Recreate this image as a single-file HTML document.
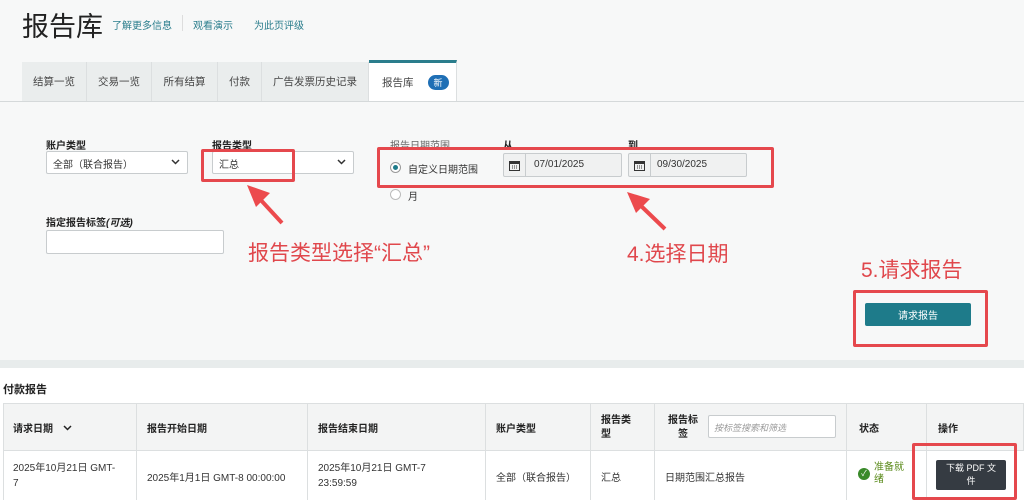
<!DOCTYPE html>
<html><head><meta charset="utf-8"><style>
*{margin:0;padding:0;box-sizing:border-box}
body{width:1024px;height:500px;overflow:hidden;background:#f7f8f8;font-family:"Liberation Sans","Noto Sans CJK SC",sans-serif;color:#333;position:relative}
.a{position:absolute;white-space:nowrap}
.lbl{font-size:10px;font-weight:bold;color:#222}
.box{background:#fff;border:1px solid #c8ccce;border-radius:2px}
.red{position:absolute;border:3px solid #e5484d;border-radius:2px}
.ann{position:absolute;color:#e0474c;font-size:21px;white-space:nowrap;font-family:"Liberation Sans","Noto Sans CJK SC",sans-serif}
.tab{position:absolute;top:62px;height:39px;background:#eaeded;border-right:1px solid #dcdfe0;font-size:10.5px;color:#444;display:flex;align-items:center;justify-content:center}
.th,.td{position:absolute;font-size:10px;display:flex;align-items:center;padding-left:10px}
.th{top:404px;height:47px;font-weight:bold;color:#222}
.td{top:452px;height:48px;color:#333}
.vl{position:absolute;width:1px;background:#dcdfe0}
.chev{position:absolute;right:7px;top:7px}
.cal{position:absolute;left:0;top:0;width:22px;height:22px;border-right:1px solid #c8ccce;display:flex;align-items:center;justify-content:center}
</style></head><body>
<div class="a" style="left:22px;top:5px;font-size:27px;color:#222">报告库</div>
<div class="a" style="left:112px;top:17px;font-size:10px;color:#2a7d8c">了解更多信息</div>
<div class="a" style="left:182px;top:15px;width:1px;height:16px;background:#ddd"></div>
<div class="a" style="left:193px;top:17px;font-size:10px;color:#2a7d8c">观看演示</div>
<div class="a" style="left:254px;top:17px;font-size:10px;color:#2a7d8c">为此页评级</div>

<div class="tab" style="left:22px;width:65px">结算一览</div>
<div class="tab" style="left:87px;width:65px">交易一览</div>
<div class="tab" style="left:152px;width:66px">所有结算</div>
<div class="tab" style="left:218px;width:44px">付款</div>
<div class="tab" style="left:262px;width:107px">广告发票历史记录</div>
<div class="tab" style="left:369px;width:88px;background:#fff;border-top:3px solid #2a7d8c;top:60px;height:42px;justify-content:flex-start;padding-left:13px">报告库<span style="margin-left:14px;background:#1f6fb5;color:#fff;font-size:9px;border-radius:8px;padding:1px 6px">新</span></div>
<div class="a" style="left:0;top:101px;width:1024px;height:1px;background:#d5d9da"></div>

<div class="a lbl" style="left:46px;top:137px">账户类型</div>
<div class="a box" style="left:46px;top:151px;width:142px;height:23px;font-size:10px;padding:4px 6px">全部（联合报告）<svg class="chev" width="9" height="6"><path d="M1 1L4.5 4.5L8 1" fill="none" stroke="#333" stroke-width="1.5"/></svg></div>
<div class="a lbl" style="left:212px;top:137px">报告类型</div>
<div class="a box" style="left:212px;top:151px;width:142px;height:23px;font-size:10px;padding:4px 6px">汇总<svg class="chev" width="9" height="6"><path d="M1 1L4.5 4.5L8 1" fill="none" stroke="#333" stroke-width="1.5"/></svg></div>
<div class="red" style="left:201px;top:149px;width:94px;height:33px"></div>

<div class="a" style="left:390px;top:137px;font-size:10px;color:#666">报告日期范围</div>
<div class="a lbl" style="left:503px;top:137px">从</div>
<div class="a lbl" style="left:628px;top:137px">到</div>
<div class="a" style="left:390px;top:162px;width:11px;height:11px;border-radius:50%;border:1px solid #999;background:#fff"><div style="margin:2px;width:5px;height:5px;border-radius:50%;background:#1e7b8a"></div></div>
<div class="a" style="left:408px;top:161px;font-size:10px">自定义日期范围</div>
<div class="a" style="left:390px;top:189px;width:11px;height:11px;border-radius:50%;border:1px solid #bbb;background:#fff"></div>
<div class="a" style="left:408px;top:188px;font-size:10px">月</div>
<div class="a box" style="left:503px;top:153px;width:119px;height:24px;background:#f0f1f1;font-size:10px"><div class="cal"><svg width="11" height="11"><rect x="0.5" y="1.5" width="10" height="9" fill="none" stroke="#333"/><rect x="0.5" y="1.5" width="10" height="2.5" fill="#333"/><path d="M3 6h1M5 6h1M7 6h1M3 8h1M5 8h1M7 8h1" stroke="#333"/></svg></div><div style="position:absolute;left:30px;top:5px">07/01/2025</div></div>
<div class="a box" style="left:628px;top:153px;width:119px;height:24px;background:#f0f1f1;font-size:10px"><div class="cal"><svg width="11" height="11"><rect x="0.5" y="1.5" width="10" height="9" fill="none" stroke="#333"/><rect x="0.5" y="1.5" width="10" height="2.5" fill="#333"/><path d="M3 6h1M5 6h1M7 6h1M3 8h1M5 8h1M7 8h1" stroke="#333"/></svg></div><div style="position:absolute;left:28px;top:5px">09/30/2025</div></div>
<div class="red" style="left:377px;top:147px;width:397px;height:41px"></div>

<div class="a lbl" style="left:46px;top:214px">指定报告标签<i>(可选)</i></div>
<div class="a box" style="left:46px;top:230px;width:178px;height:24px"></div>

<div class="ann" style="left:248px;top:237px">报告类型选择“汇总”</div>
<div class="ann" style="left:627px;top:238px">4.选择日期</div>
<div class="ann" style="left:861px;top:254px">5.请求报告</div>
<div class="ann" style="left:731px;top:377px">6.下载保存，文件发给财务</div>

<svg class="a" style="left:0;top:0" width="1024" height="500">
<g fill="#ec4a4d" stroke="#ec4a4d">
<line x1="282" y1="223" x2="258" y2="197" stroke-width="4"/>
<polygon points="247,185 270,193 256,207" stroke="none"/>
<line x1="665" y1="229" x2="638" y2="203" stroke-width="4"/>
<polygon points="627,192 650,199 636,213" stroke="none"/>
<line x1="830" y1="420" x2="905" y2="454" stroke-width="3"/>
<polygon points="920,461 896,462 904,444" stroke="none"/>
</g></svg>

<div class="red" style="left:853px;top:290px;width:135px;height:57px"></div>
<div class="a" style="left:865px;top:303px;width:106px;height:23px;background:#1e7b8a;color:#fff;font-size:10px;display:flex;align-items:center;justify-content:center;border-radius:2px">请求报告</div>

<div class="a" style="left:0;top:360px;width:1024px;height:8px;background:#e8ecec"></div>
<div class="a" style="left:0;top:368px;width:1024px;height:132px;background:#fff"></div>
<div class="a" style="left:3px;top:381px;font-size:11px;font-weight:bold;color:#222">付款报告</div>

<div class="a" style="left:3px;top:403px;width:1021px;height:48px;background:#f3f4f4;border:1px solid #dcdfe0"></div>
<div class="a" style="left:3px;top:451px;width:1021px;height:49px;border-left:1px solid #dcdfe0"></div>
<div class="vl" style="left:136px;top:403px;height:97px"></div>
<div class="vl" style="left:307px;top:403px;height:97px"></div>
<div class="vl" style="left:485px;top:403px;height:97px"></div>
<div class="vl" style="left:590px;top:403px;height:97px"></div>
<div class="vl" style="left:654px;top:403px;height:97px"></div>
<div class="vl" style="left:846px;top:403px;height:97px"></div>
<div class="vl" style="left:926px;top:403px;height:97px"></div>

<div class="th" style="left:3px">请求日期 <svg style="margin-left:10px" width="9" height="6"><path d="M1 1L4.5 4.5L8 1" fill="none" stroke="#222" stroke-width="1.5"/></svg></div>
<div class="th" style="left:137px">报告开始日期</div>
<div class="th" style="left:308px">报告结束日期</div>
<div class="th" style="left:486px">账户类型</div>
<div class="th" style="left:591px;line-height:14px">报告类<br>型</div>
<div class="th" style="left:658px;line-height:14px;text-align:center">报告标<br>签</div>
<div class="a box" style="left:708px;top:415px;width:128px;height:23px;font-size:9px;color:#999;font-style:italic;padding:5px 5px">按标签搜索和筛选</div>
<div class="th" style="left:849px">状态</div>
<div class="th" style="left:928px">操作</div>

<div class="td" style="left:3px;line-height:15px">2025年10月21日 GMT-<br>7</div>
<div class="td" style="left:137px">2025年1月1日 GMT-8 00:00:00</div>
<div class="td" style="left:308px;line-height:15px">2025年10月21日 GMT-7<br>23:59:59</div>
<div class="td" style="left:486px">全部（联合报告）</div>
<div class="td" style="left:591px">汇总</div>
<div class="td" style="left:655px">日期范围汇总报告</div>
<div class="a" style="left:858px;top:468px;width:12px;height:12px;border-radius:50%;background:#3a8a2a;color:#fff;font-size:8px;text-align:center;line-height:12px">✓</div>
<div class="a" style="left:874px;top:462px;font-size:10px;color:#5a8a1a;line-height:12px">准备就<br>绪</div>
<div class="red" style="left:912px;top:443px;width:105px;height:57px"></div>
<div class="a" style="left:936px;top:460px;width:70px;height:30px;background:#353b42;color:#fff;font-size:9px;text-align:center;line-height:13px;padding-top:2px;border-radius:2px">下载 PDF 文<br>件</div>
</body></html>
